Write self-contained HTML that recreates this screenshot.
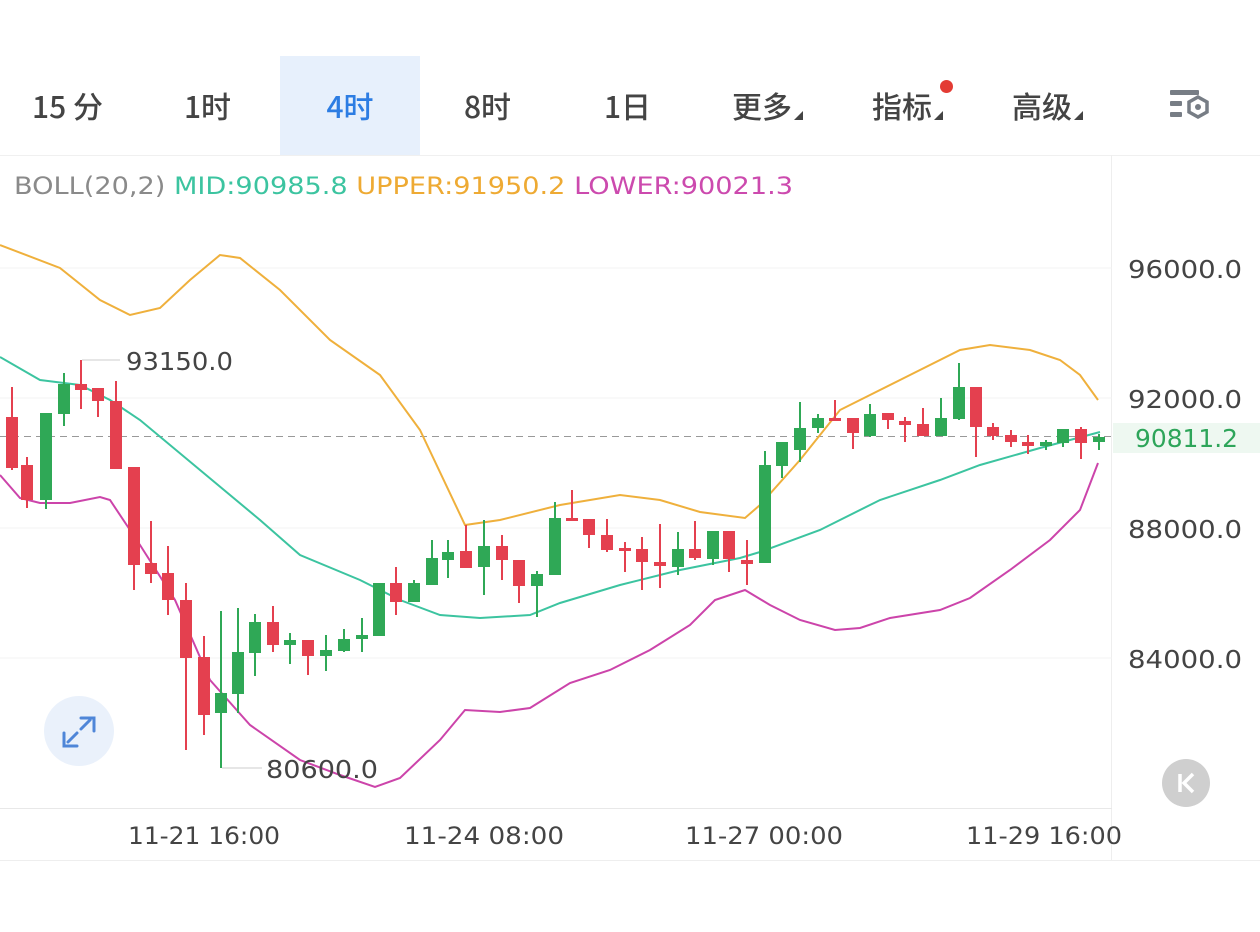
<!DOCTYPE html>
<html><head><meta charset="utf-8"><style>
html,body{margin:0;padding:0;background:#fff;}
body{width:1260px;height:932px;overflow:hidden;position:relative;font-family:"Liberation Sans","Noto Sans CJK SC",sans-serif;}
.tab{position:absolute;top:56px;height:99px;line-height:99px;font-size:30px;color:#444;text-align:center;font-family:"Noto Sans CJK SC","Liberation Sans",sans-serif;font-weight:500;}
.tab.active{background:#e7f0fc;color:#2d7de3;}
.tri{display:inline-block;width:0;height:0;border-left:9px solid transparent;border-bottom:9px solid #444;vertical-align:-2px;margin-left:2px;}
svg{position:absolute;left:0;top:0;}
</style></head><body>
<div class="tab" style="left:10px;width:115px;">15 分</div>
<div class="tab" style="left:150px;width:115px;">1时</div>
<div class="tab active" style="left:280px;width:140px;">4时</div>
<div class="tab" style="left:430px;width:115px;">8时</div>
<div class="tab" style="left:570px;width:115px;">1日</div>
<div class="tab" style="left:710px;width:115px;">更多<span class="tri"></span></div>
<div class="tab" style="left:850px;width:115px;">指标<span class="tri"></span></div>
<div class="tab" style="left:990px;width:115px;">高级<span class="tri"></span></div>
<div style="position:absolute;left:940px;top:80px;width:13px;height:13px;border-radius:50%;background:#e33b34;"></div>
<svg width="1260" height="932" viewBox="0 0 1260 932" xmlns="http://www.w3.org/2000/svg">
<g fill="#777d85">
<rect x="1170" y="90" width="29" height="5" rx="1"/>
<rect x="1170" y="101" width="12" height="5" rx="1"/>
<rect x="1170" y="112" width="12" height="5" rx="1"/>
<path d="M1198 97 l9 5 v10 l-9 5 l-9 -5 v-10z" fill="none" stroke="#777d85" stroke-width="3.5"/>
<circle cx="1198" cy="107" r="3"/>
</g>
<line x1="0" y1="155.5" x2="1260" y2="155.5" stroke="#f0f0f0"/>
<line x1="1111.5" y1="155" x2="1111.5" y2="860" stroke="#eee"/>
<g stroke="#f3f3f3" stroke-width="1">
<line x1="0" y1="268" x2="1112" y2="268"/><line x1="0" y1="398" x2="1112" y2="398"/>
<line x1="0" y1="528" x2="1112" y2="528"/><line x1="0" y1="658" x2="1112" y2="658"/>
</g>
<line x1="0" y1="808.5" x2="1112" y2="808.5" stroke="#e8e8e8"/>
<line x1="0" y1="860.5" x2="1260" y2="860.5" stroke="#eee"/>
<text x="14" y="194" font-size="24" fill="#8a8a8a" font-family="DejaVu Sans,sans-serif" textLength="779" lengthAdjust="spacingAndGlyphs">BOLL(20,2) <tspan fill="#3cc4a0">MID:90985.8</tspan> <tspan fill="#eeaa33">UPPER:91950.2</tspan> <tspan fill="#cc4aae">LOWER:90021.3</tspan></text>
<g font-size="25" fill="#444" font-family="DejaVu Sans,sans-serif">
<text x="1128" y="278" textLength="114" lengthAdjust="spacingAndGlyphs">96000.0</text>
<text x="1128" y="408" textLength="114" lengthAdjust="spacingAndGlyphs">92000.0</text>
<text x="1128" y="538" textLength="114" lengthAdjust="spacingAndGlyphs">88000.0</text>
<text x="1128" y="668" textLength="114" lengthAdjust="spacingAndGlyphs">84000.0</text>
</g>
<rect x="1113" y="423" width="147" height="30" fill="#eef8f1"/>
<text x="1135" y="447" font-size="25" fill="#2ea55a" font-family="DejaVu Sans,sans-serif" textLength="103" lengthAdjust="spacingAndGlyphs">90811.2</text>
<line x1="0" y1="436.5" x2="1112" y2="436.5" stroke="#999" stroke-dasharray="7,5"/>
<polyline fill="none" stroke="#efb03c" stroke-width="2" points="0,245 60,268 100,300 130,315 160,308 190,280 220,255 240,258 280,290 330,340 380,375 420,430 465,525 500,520 560,505 620,495 660,500 700,512 745,518 760,505 800,460 840,410 870,395 900,380 960,350 990,345 1030,350 1060,360 1080,375 1098,400"/>
<polyline fill="none" stroke="#3cc4a0" stroke-width="2" points="0,357 40,380 80,385 110,400 140,420 200,470 260,520 300,555 360,580 400,600 440,615 480,618 530,615 560,603 620,585 680,570 740,558 760,552 820,530 880,500 940,480 980,465 1040,448 1100,432"/>
<polyline fill="none" stroke="#cc44aa" stroke-width="2" points="0,475 20,498 40,503 70,503 100,497 110,500 140,545 175,600 210,680 250,725 300,760 340,775 375,787 400,778 440,740 465,710 500,712 530,708 570,683 610,670 650,650 690,625 715,600 745,590 770,605 800,620 835,630 860,628 890,618 940,610 970,598 1010,570 1050,540 1080,510 1098,463"/>
<g stroke="#e4404f" stroke-width="2" fill="#e4404f">
<line x1="12" y1="387" x2="12" y2="470"/><rect x="6" y="417" width="12" height="51" stroke="none"/>
<line x1="27" y1="457" x2="27" y2="508"/><rect x="21" y="465" width="12" height="35" stroke="none"/>
<line x1="81" y1="360" x2="81" y2="409"/><rect x="75" y="384" width="12" height="6" stroke="none"/>
<line x1="98" y1="388" x2="98" y2="417"/><rect x="92" y="388" width="12" height="13" stroke="none"/>
<line x1="116" y1="381" x2="116" y2="469"/><rect x="110" y="401" width="12" height="68" stroke="none"/>
<line x1="134" y1="467" x2="134" y2="590"/><rect x="128" y="467" width="12" height="98" stroke="none"/>
<line x1="151" y1="521" x2="151" y2="583"/><rect x="145" y="563" width="12" height="11" stroke="none"/>
<line x1="168" y1="546" x2="168" y2="615"/><rect x="162" y="573" width="12" height="27" stroke="none"/>
<line x1="186" y1="583" x2="186" y2="750"/><rect x="180" y="600" width="12" height="58" stroke="none"/>
<line x1="204" y1="636" x2="204" y2="735"/><rect x="198" y="657" width="12" height="58" stroke="none"/>
<line x1="273" y1="606" x2="273" y2="652"/><rect x="267" y="622" width="12" height="23" stroke="none"/>
<line x1="308" y1="640" x2="308" y2="675"/><rect x="302" y="640" width="12" height="16" stroke="none"/>
<line x1="396" y1="567" x2="396" y2="615"/><rect x="390" y="583" width="12" height="19" stroke="none"/>
<line x1="466" y1="525" x2="466" y2="568"/><rect x="460" y="551" width="12" height="17" stroke="none"/>
<line x1="502" y1="535" x2="502" y2="580"/><rect x="496" y="546" width="12" height="14" stroke="none"/>
<line x1="519" y1="560" x2="519" y2="603"/><rect x="513" y="560" width="12" height="26" stroke="none"/>
<line x1="572" y1="490" x2="572" y2="521"/><rect x="566" y="518" width="12" height="3" stroke="none"/>
<line x1="589" y1="519" x2="589" y2="548"/><rect x="583" y="519" width="12" height="16" stroke="none"/>
<line x1="607" y1="519" x2="607" y2="552"/><rect x="601" y="535" width="12" height="15" stroke="none"/>
<line x1="625" y1="542" x2="625" y2="572"/><rect x="619" y="548" width="12" height="3" stroke="none"/>
<line x1="642" y1="537" x2="642" y2="590"/><rect x="636" y="549" width="12" height="13" stroke="none"/>
<line x1="660" y1="524" x2="660" y2="588"/><rect x="654" y="562" width="12" height="4" stroke="none"/>
<line x1="695" y1="521" x2="695" y2="560"/><rect x="689" y="549" width="12" height="9" stroke="none"/>
<line x1="729" y1="531" x2="729" y2="572"/><rect x="723" y="531" width="12" height="28" stroke="none"/>
<line x1="747" y1="540" x2="747" y2="585"/><rect x="741" y="560" width="12" height="4" stroke="none"/>
<line x1="835" y1="400" x2="835" y2="421"/><rect x="829" y="418" width="12" height="3" stroke="none"/>
<line x1="853" y1="418" x2="853" y2="449"/><rect x="847" y="418" width="12" height="15" stroke="none"/>
<line x1="888" y1="413" x2="888" y2="429"/><rect x="882" y="413" width="12" height="7" stroke="none"/>
<line x1="905" y1="417" x2="905" y2="442"/><rect x="899" y="421" width="12" height="4" stroke="none"/>
<line x1="923" y1="408" x2="923" y2="436"/><rect x="917" y="424" width="12" height="12" stroke="none"/>
<line x1="976" y1="387" x2="976" y2="457"/><rect x="970" y="387" width="12" height="40" stroke="none"/>
<line x1="993" y1="423" x2="993" y2="440"/><rect x="987" y="427" width="12" height="9" stroke="none"/>
<line x1="1011" y1="430" x2="1011" y2="447"/><rect x="1005" y="435" width="12" height="7" stroke="none"/>
<line x1="1028" y1="435" x2="1028" y2="454"/><rect x="1022" y="442" width="12" height="4" stroke="none"/>
<line x1="1081" y1="427" x2="1081" y2="459"/><rect x="1075" y="429" width="12" height="14" stroke="none"/>
</g>
<g stroke="#2fa856" stroke-width="2" fill="#2fa856">
<line x1="46" y1="413" x2="46" y2="509"/><rect x="40" y="413" width="12" height="87" stroke="none"/>
<line x1="64" y1="373" x2="64" y2="426"/><rect x="58" y="384" width="12" height="30" stroke="none"/>
<line x1="221" y1="611" x2="221" y2="768"/><rect x="215" y="693" width="12" height="20" stroke="none"/>
<line x1="238" y1="608" x2="238" y2="713"/><rect x="232" y="652" width="12" height="42" stroke="none"/>
<line x1="255" y1="614" x2="255" y2="676"/><rect x="249" y="622" width="12" height="31" stroke="none"/>
<line x1="290" y1="633" x2="290" y2="664"/><rect x="284" y="640" width="12" height="5" stroke="none"/>
<line x1="326" y1="635" x2="326" y2="671"/><rect x="320" y="650" width="12" height="6" stroke="none"/>
<line x1="344" y1="629" x2="344" y2="652"/><rect x="338" y="639" width="12" height="12" stroke="none"/>
<line x1="362" y1="618" x2="362" y2="652"/><rect x="356" y="635" width="12" height="4" stroke="none"/>
<line x1="379" y1="583" x2="379" y2="636"/><rect x="373" y="583" width="12" height="53" stroke="none"/>
<line x1="414" y1="580" x2="414" y2="602"/><rect x="408" y="583" width="12" height="19" stroke="none"/>
<line x1="432" y1="540" x2="432" y2="585"/><rect x="426" y="558" width="12" height="27" stroke="none"/>
<line x1="448" y1="540" x2="448" y2="578"/><rect x="442" y="552" width="12" height="8" stroke="none"/>
<line x1="484" y1="520" x2="484" y2="595"/><rect x="478" y="546" width="12" height="21" stroke="none"/>
<line x1="537" y1="571" x2="537" y2="617"/><rect x="531" y="574" width="12" height="12" stroke="none"/>
<line x1="555" y1="502" x2="555" y2="575"/><rect x="549" y="518" width="12" height="57" stroke="none"/>
<line x1="678" y1="532" x2="678" y2="575"/><rect x="672" y="549" width="12" height="18" stroke="none"/>
<line x1="713" y1="531" x2="713" y2="565"/><rect x="707" y="531" width="12" height="28" stroke="none"/>
<line x1="765" y1="451" x2="765" y2="563"/><rect x="759" y="465" width="12" height="98" stroke="none"/>
<line x1="782" y1="442" x2="782" y2="478"/><rect x="776" y="442" width="12" height="24" stroke="none"/>
<line x1="800" y1="402" x2="800" y2="462"/><rect x="794" y="428" width="12" height="22" stroke="none"/>
<line x1="818" y1="414" x2="818" y2="433"/><rect x="812" y="418" width="12" height="10" stroke="none"/>
<line x1="870" y1="404" x2="870" y2="437"/><rect x="864" y="414" width="12" height="22" stroke="none"/>
<line x1="941" y1="398" x2="941" y2="436"/><rect x="935" y="418" width="12" height="18" stroke="none"/>
<line x1="959" y1="363" x2="959" y2="420"/><rect x="953" y="387" width="12" height="32" stroke="none"/>
<line x1="1046" y1="440" x2="1046" y2="450"/><rect x="1040" y="442" width="12" height="4" stroke="none"/>
<line x1="1063" y1="429" x2="1063" y2="447"/><rect x="1057" y="429" width="12" height="14" stroke="none"/>
<line x1="1099" y1="434" x2="1099" y2="450"/><rect x="1093" y="437" width="12" height="5" stroke="none"/>
</g>
<line x1="82" y1="360" x2="120" y2="360" stroke="#ccc"/>
<text x="126" y="370" font-size="25" fill="#444" font-family="DejaVu Sans,sans-serif" textLength="107" lengthAdjust="spacingAndGlyphs">93150.0</text>
<line x1="222" y1="768" x2="262" y2="768" stroke="#ccc"/>
<text x="266" y="778" font-size="25" fill="#444" font-family="DejaVu Sans,sans-serif" textLength="112" lengthAdjust="spacingAndGlyphs">80600.0</text>
<circle cx="79" cy="731" r="35" fill="#eaf1fb"/>
<g stroke="#4f86d8" stroke-width="3" fill="none" stroke-linecap="round">
<path d="M68 742 L77 733 M64 733 V746 H77"/>
<path d="M90 720 L81 729 M81 718 H94 V731"/>
</g>
<circle cx="1186" cy="783" r="24" fill="#cfcfcf"/>
<path d="M1180 774 V792 M1193 774 L1184 783 L1193 792" stroke="#fff" stroke-width="3.5" fill="none"/>
<g font-size="24" fill="#444" font-family="DejaVu Sans,sans-serif">
<text x="128" y="844" textLength="152" lengthAdjust="spacingAndGlyphs">11-21 16:00</text>
<text x="404" y="844" textLength="160" lengthAdjust="spacingAndGlyphs">11-24 08:00</text>
<text x="685" y="844" textLength="158" lengthAdjust="spacingAndGlyphs">11-27 00:00</text>
<text x="966" y="844" textLength="156" lengthAdjust="spacingAndGlyphs">11-29 16:00</text>
</g>
</svg>
</body></html>
